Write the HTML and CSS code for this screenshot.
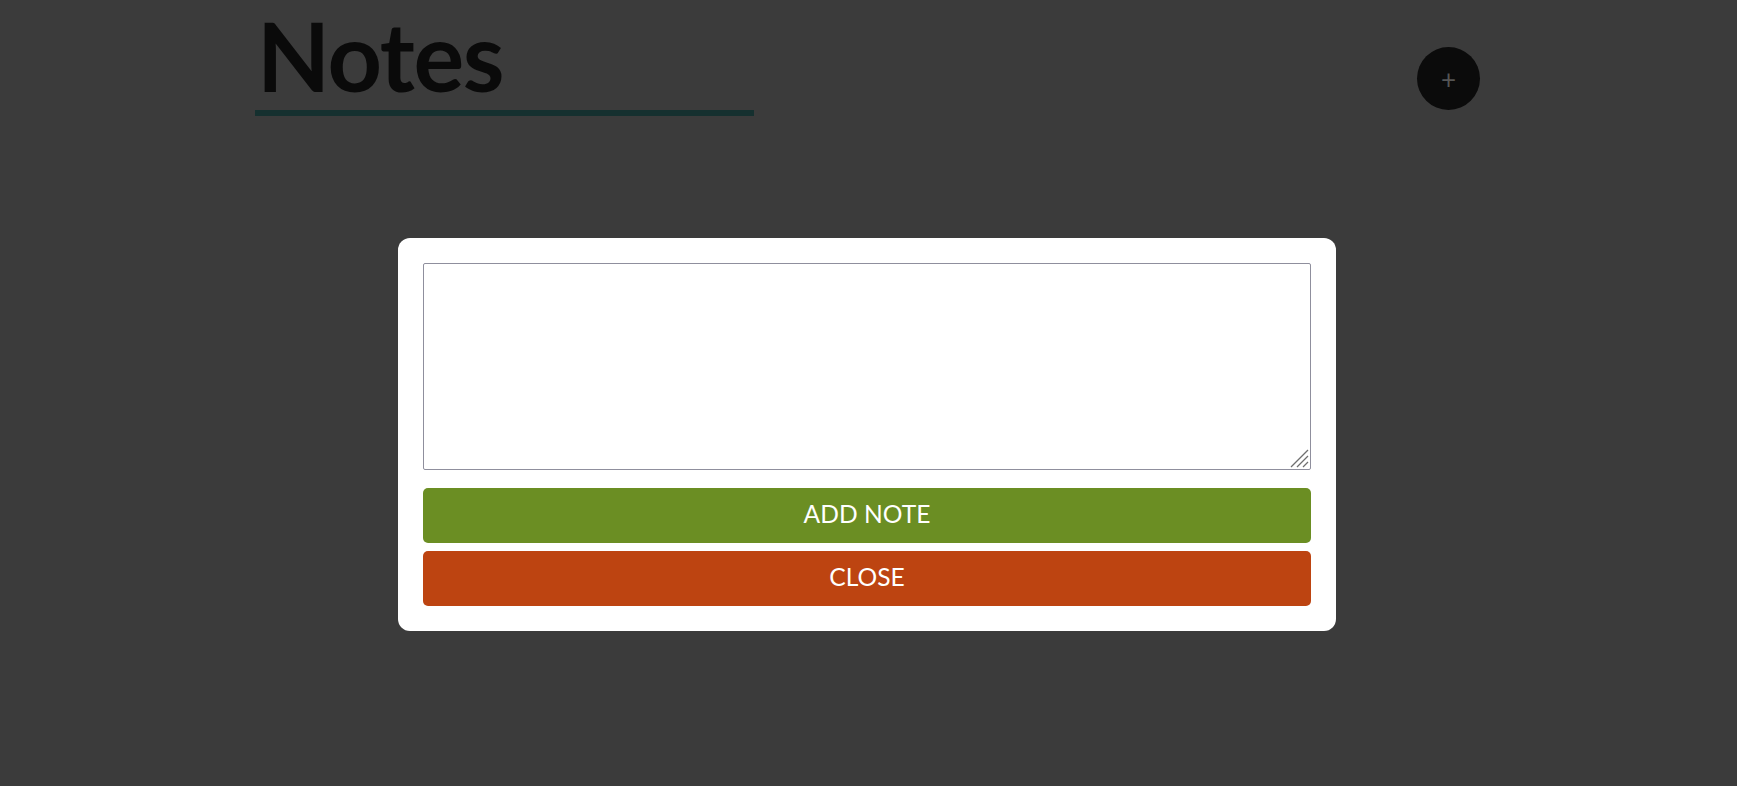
FILE: index.html
```html
<!DOCTYPE html>
<html lang="en">
<head>
<meta charset="utf-8">
<title>Notes</title>
<link rel="stylesheet" href="styles.css">
</head>
<body>
<div class="page">
  <header class="header">
    <div class="title-block">
      <h1 class="title">Notes</h1>
      <div class="title-rule"></div>
    </div>
    <button class="add-btn" type="button">+</button>
  </header>
</div>
<div class="backdrop">
  <div class="modal">
    <div class="input-wrap">
      <textarea class="note-input"></textarea>
      <svg class="grip" width="19" height="19" viewBox="0 0 19 19" aria-hidden="true">
        <line x1="1" y1="18" x2="18" y2="1" />
        <line x1="7" y1="18" x2="18" y2="7" />
        <line x1="13" y1="18" x2="18" y2="13" />
      </svg>
    </div>
    <button class="btn btn-add" type="button">Add Note</button>
    <button class="btn btn-close" type="button">Close</button>
  </div>
</div>
</body>
</html>
```
FILE: styles.css
```css
html, body {
  margin: 0;
  padding: 0;
  height: 100%;
}
body {
  background: #3b3b3b;
  font-family: Lato, "Liberation Sans", sans-serif;
  overflow: hidden;
}
.page {
  width: 1227px;
  margin: 0 auto;
}
.header {
  display: flex;
  justify-content: space-between;
  align-items: flex-start;
}
.title-block {
  display: flex;
  flex-direction: column;
}
.title {
  margin: -2px 0 0 2px;
  font-size: 95px;
  font-weight: 700;
  letter-spacing: -1.3px;
  line-height: 1.2;
  color: #0a0a0a;
}
.title-rule {
  width: 499px;
  height: 6px;
  margin-top: -2px;
  background: #15302f;
}
.add-btn {
  margin-top: 47px;
  margin-right: 2px;
  width: 63px;
  height: 63px;
  border: none;
  border-radius: 50%;
  background: #0b0b0b;
  color: #555555;
  font-family: Lato, "Liberation Sans", sans-serif;
  font-size: 26px;
  line-height: 1;
  padding: 0;
}
.backdrop {
  position: fixed;
  inset: 0;
  display: flex;
  justify-content: center;
  align-items: flex-start;
  padding-top: 238px;
  padding-right: 3px;
}
.modal {
  width: 938px;
  box-sizing: border-box;
  padding: 25px;
  background: #ffffff;
  border-radius: 12px;
  display: flex;
  flex-direction: column;
}
.input-wrap {
  position: relative;
  height: 207px;
  margin-bottom: 18px;
}
.note-input {
  display: block;
  box-sizing: border-box;
  width: 888px;
  height: 207px;
  margin: 0;
  border: 1px solid #8f8f9d;
  border-radius: 2px;
  resize: none;
}
.grip {
  position: absolute;
  right: 2px;
  bottom: 2px;
  stroke: #6f6f6f;
  stroke-width: 1.3;
}
.btn {
  height: 55px;
  border: none;
  border-radius: 5px;
  color: #ffffff;
  font-family: Lato, "Liberation Sans", sans-serif;
  font-size: 24.6px;
  text-transform: uppercase;
  padding: 0 0 5px 0;
}
.btn-add {
  background: #6b8e23;
  margin-bottom: 8px;
}
.btn-close {
  background: #bd4411;
}
```
